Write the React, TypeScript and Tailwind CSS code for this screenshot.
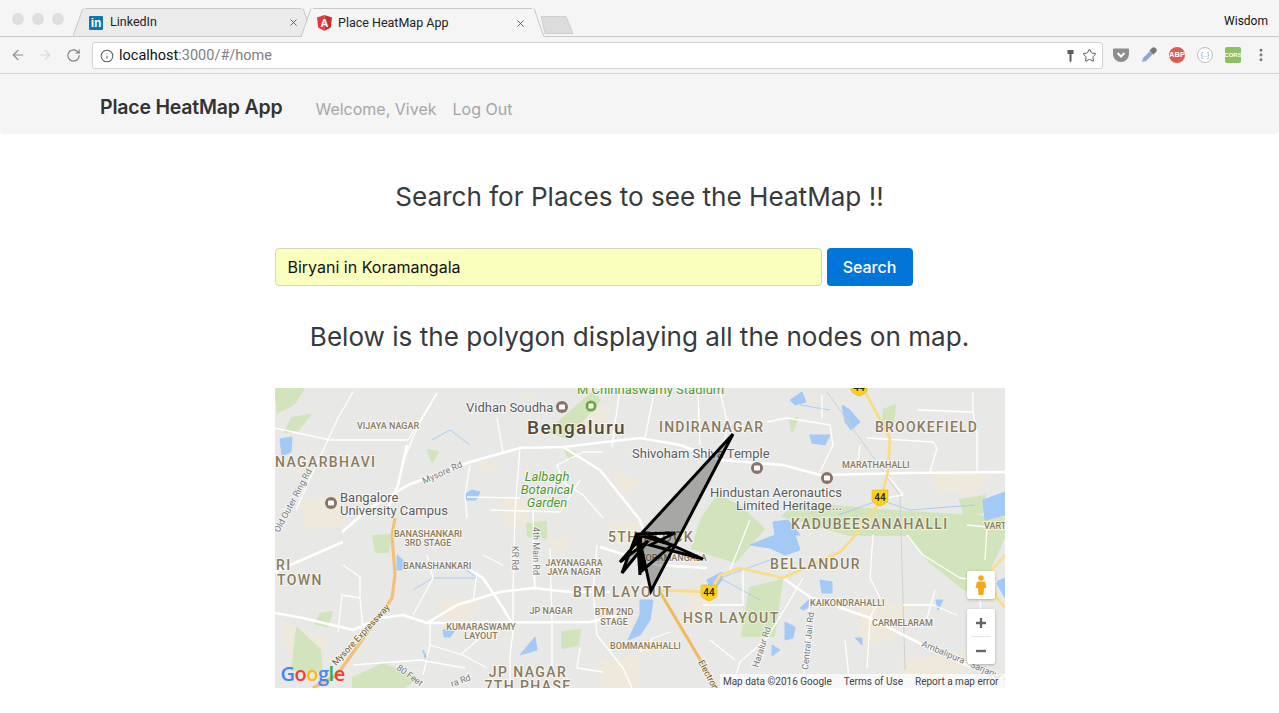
import { ArrowLeft, ArrowRight, Info, MoreVertical, RotateCw, Star, X } from 'lucide-react';

type Label = {
  text: string;
  x: number;
  y: number;
  size: number;
  color?: string;
  anchor?: 'start' | 'middle' | 'end';
  spacing?: number;
  weight?: number;
  italic?: boolean;
  rotate?: number;
};

const BROWN = '#8a7b5c';
const DARK = '#5c5c5c';
const ROAD = '#777777';
const GREEN = '#4e9a2c';

const labels: Label[] = [
  { text: 'M Chinnaswamy Stadium', x: 577, y: 394, size: 13, color: GREEN },
  { text: 'Vidhan Soudha', x: 466, y: 412, size: 13, color: DARK },
  { text: 'Bengaluru', x: 527, y: 434, size: 19, color: '#574a36', weight: 500, spacing: 1.4 },
  { text: 'VIJAYA NAGAR', x: 357, y: 429, size: 9, color: BROWN, weight: 500 },
  { text: 'NAGARBHAVI', x: 275, y: 467, size: 14, color: BROWN, weight: 500, spacing: 1.4 },
  { text: 'Mysore Rd', x: 424, y: 484, size: 9, color: ROAD, rotate: -24 },
  { text: 'Old Outer Ring Rd', x: 279, y: 533, size: 9, color: ROAD, rotate: -62 },
  { text: 'Bangalore', x: 340, y: 502, size: 13, color: DARK },
  { text: 'University Campus', x: 340, y: 515, size: 13, color: DARK },
  { text: 'Lalbagh', x: 547, y: 481, size: 13, color: GREEN, anchor: 'middle', italic: true },
  { text: 'Botanical', x: 547, y: 494, size: 13, color: GREEN, anchor: 'middle', italic: true },
  { text: 'Garden', x: 547, y: 507, size: 13, color: GREEN, anchor: 'middle', italic: true },
  { text: 'BANASHANKARI', x: 428, y: 537, size: 9, color: BROWN, anchor: 'middle', weight: 500 },
  { text: '3RD STAGE', x: 428, y: 546, size: 9, color: BROWN, anchor: 'middle', weight: 500 },
  { text: 'BANASHANKARI', x: 403, y: 569, size: 9, color: BROWN, weight: 500 },
  { text: 'RI', x: 276, y: 570, size: 14, color: BROWN, weight: 500, spacing: 1.4 },
  { text: 'TOWN', x: 277, y: 585, size: 14, color: BROWN, weight: 500, spacing: 1.4 },
  { text: 'KR Rd', x: 512, y: 546, size: 9, color: ROAD, rotate: 90 },
  { text: '4th Main Rd', x: 533, y: 527, size: 9, color: ROAD, rotate: 90 },
  { text: 'JAYANAGARA', x: 574, y: 566, size: 9, color: BROWN, anchor: 'middle', weight: 500 },
  { text: 'JAYA NAGAR', x: 574, y: 575, size: 9, color: BROWN, anchor: 'middle', weight: 500 },
  { text: 'BTM LAYOUT', x: 573, y: 597, size: 14, color: BROWN, weight: 500, spacing: 1.5 },
  { text: 'JP NAGAR', x: 551, y: 614, size: 9, color: BROWN, anchor: 'middle', weight: 500 },
  { text: 'BTM 2ND', x: 614, y: 615, size: 9, color: BROWN, anchor: 'middle', weight: 500 },
  { text: 'STAGE', x: 614, y: 625, size: 9, color: BROWN, anchor: 'middle', weight: 500 },
  { text: 'KUMARASWAMY', x: 481, y: 630, size: 9, color: BROWN, anchor: 'middle', weight: 500 },
  { text: 'LAYOUT', x: 481, y: 639, size: 9, color: BROWN, anchor: 'middle', weight: 500 },
  { text: 'BOMMANAHALLI', x: 610, y: 649, size: 9, color: BROWN, weight: 500 },
  { text: 'JP NAGAR', x: 528, y: 677, size: 14, color: BROWN, anchor: 'middle', weight: 500, spacing: 1.4 },
  { text: '7TH PHASE', x: 528, y: 691, size: 14, color: BROWN, anchor: 'middle', weight: 500, spacing: 1.4 },
  { text: 'Mysore Expressway', x: 336, y: 666, size: 9, color: '#6e5a2c', rotate: -47 },
  { text: '80 Feet', x: 396, y: 669, size: 9, color: ROAD, rotate: 36 },
  { text: 'ra Rd', x: 452, y: 687, size: 9, color: ROAD, rotate: -20 },
  { text: 'INDIRANAGAR', x: 659, y: 432, size: 14, color: BROWN, weight: 500, spacing: 1.2 },
  { text: 'Shivoham Shiva Temple', x: 632, y: 458, size: 13, color: DARK },
  { text: 'BROOKEFIELD', x: 875, y: 432, size: 14, color: BROWN, weight: 500, spacing: 1.2 },
  { text: 'MARATHAHALLI', x: 842, y: 468, size: 9, color: BROWN, weight: 500 },
  { text: 'Hindustan Aeronautics', x: 842, y: 497, size: 13, color: DARK, anchor: 'end' },
  { text: 'Limited Heritage...', x: 842, y: 510, size: 13, color: DARK, anchor: 'end' },
  { text: 'KADUBEESANAHALLI', x: 791, y: 529, size: 14, color: BROWN, weight: 500, spacing: 1.3 },
  { text: 'VART', x: 984, y: 529, size: 9, color: BROWN, weight: 500 },
  { text: '5TH BLOCK', x: 608, y: 542, size: 14, color: BROWN, weight: 500, spacing: 1.4 },
  { text: 'KORAMANGALA', x: 640, y: 561, size: 9, color: BROWN, weight: 500 },
  { text: 'BELLANDUR', x: 770, y: 569, size: 14, color: BROWN, weight: 500, spacing: 1.4 },
  { text: 'HSR LAYOUT', x: 683, y: 623, size: 14, color: BROWN, weight: 500, spacing: 1.4 },
  { text: 'KAIKONDRAHALLI', x: 810, y: 606, size: 9, color: BROWN, weight: 500 },
  { text: 'CARMELARAM', x: 872, y: 626, size: 9, color: BROWN, weight: 500 },
  { text: 'Ambalipura - Sarjapur Rd', x: 921, y: 646, size: 9, color: ROAD, rotate: 23 },
  { text: 'Electronic', x: 698, y: 662, size: 9, color: '#6e5a2c', rotate: 62 },
  { text: 'Haralur Rd', x: 758, y: 668, size: 9, color: ROAD, rotate: -72 },
  { text: 'Central Jail Rd', x: 808, y: 670, size: 9, color: ROAD, rotate: -84 },
];

const tans = [
  '480,462 500,460 498,470 482,472',
  '500,500 528,500 526,528 505,525',
  '590,410 612,405 606,420 590,422',
  '520,395 532,392 530,402',
  '610,470 640,480 625,495',
  '550,540 570,538 565,552 552,552',
  '300,500 340,495 345,525 305,530',
  '280,620 330,640 320,660 285,650',
  '610,525 640,520 640,545 615,545',
  '690,590 712,598 700,620 690,615',
  '860,600 910,605 895,640 860,645',
  '900,660 970,650 960,680 905,680',
  '930,470 990,475 975,495 935,490',
  '440,600 480,600 470,620 440,620',
  '600,660 640,655 640,688 600,688',
];

const greens = [
  '275,388 304,388 294,404 278,412',
  '292,418 310,415 298,430 285,432',
  '592,393 600,400 567,438 548,432 570,412',
  '718,495 742,508 764,529 735,562 692,548 702,518',
  '800,503 880,510 1005,518 1005,535 985,580 965,590 930,562 907,535 850,535 782,516',
  '750,588 782,580 774,636 742,636',
  '297,628 320,650 322,672 292,670',
  '353,678 383,664 417,678 403,688 353,688',
  '373,536 390,535 388,552 376,552',
  '320,614 332,612 328,626 316,624',
  '527,524 546,522 546,538 528,536',
  '884,410 895,405 893,424 882,428',
  '960,500 985,496 985,512 965,516',
  '565,450 575,452 570,460',
  '562,632 580,630 578,645 562,648',
  '428,450 438,452 432,462',
  '790,420 798,418 792,432',
];

const waters = [
  '280,439 292,437 291,452 282,456',
  '842,405 850,410 860,422 851,430 845,422',
  '810,435 830,435 825,445 812,443',
  '790,400 802,392 806,402 795,405',
  '773,522 788,520 800,535 775,535',
  '750,545 775,535 795,535 800,550 785,555 770,548',
  '983,500 1005,492 1005,515 985,520',
  '707,580 722,572 722,580 712,592',
  '820,580 832,582 832,593 822,593',
  '800,608 812,597 812,606 803,610',
  '785,622 795,627 793,638 785,640',
  '772,645 780,650 772,656',
  '936,600 943,600 938,610',
  '855,638 862,638 862,645',
  '628,640 640,615 640,635',
  '640,600 653,600 650,620 640,635',
  '520,655 535,637 537,650',
  '443,630 455,630 450,637 444,637',
  '423,650 428,660 425,658',
  '397,555 403,560 402,570 397,570',
  '465,494 472,490 480,492 476,500 466,500',
  '996,582 1005,578 1005,598',
];

const canals = [
  'M413,590 L433,578 L477,578 L460,565',
  'M838,515 L880,500 L910,510 L975,505',
  'M770,560 L720,578 L760,600',
  'M432,440 L450,430 L470,445',
  'M800,405 L830,410',
];

const mainRoads = [
  'M342,532 L370,508 L408,485 L470,462 L520,448 L563,447 L640,438',
  'M275,613 L303,618 L353,630 L380,618 L403,615 L427,623 L457,605 L500,592 L533,588 L570,592 L610,592',
  'M275,572 L297,562 L343,542',
  'M467,568 L483,578 L503,608 L513,625',
  'M427,623 L590,622 L630,612',
  'M640,438 L680,445 L720,460 L783,465 L820,475 L907,473 L1005,472',
  'M600,547 L657,565 L707,568',
  'M783,578 L810,597 L870,618 L923,645 L973,668',
  'M407,445 L398,485 L385,515',
  'M563,447 L600,470 L640,520 L645,535',
];

const minorRoads = [
  'M353,392 L338,418 L313,472 L296,510',
  'M275,428 L330,440 L408,440 L437,393',
  'M403,462 L417,428 L437,393',
  'M497,418 L503,452',
  'M465,495 L467,518 M467,497 L520,498',
  'M470,465 L465,495',
  'M563,482 L583,495 L603,518',
  'M603,452 L583,452 L557,465 L563,482',
  'M620,388 L612,447',
  'M655,388 L645,438',
  'M698,395 L700,445',
  'M720,392 L728,425 L720,460',
  'M767,422 L787,418 L830,425 L833,445 L820,472',
  'M822,395 L822,418',
  'M867,438 L933,442 L937,448 L930,472',
  'M860,445 L857,468',
  'M917,410 L973,412 L977,432 L977,472',
  'M973,392 L973,412',
  'M887,475 L903,495 L887,498',
  'M967,525 L987,527 L985,560',
  'M520,448 L515,510 L513,592',
  'M533,510 L535,588',
  'M490,510 L560,512 L580,480',
  'M343,565 L360,577 L360,598 L342,595 L338,632',
  'M360,598 L363,628',
  'M430,622 L430,645 L423,675',
  'M430,645 L463,655 L487,668',
  'M460,655 L487,632 L487,620',
  'M477,572 L473,602',
  'M483,555 L503,565',
  'M427,555 L433,578 L413,615',
  'M513,592 L513,632 L510,655 L510,688',
  'M533,568 L535,588',
  'M550,548 L552,625 L552,668',
  'M597,545 L593,592 L597,635 L623,668 L632,688',
  'M580,648 L577,668 L603,672',
  'M873,535 L870,578 L880,598 L870,618 L867,668',
  'M903,605 L933,605 L957,615',
  'M907,535 L923,555 L960,578 L997,582',
  'M743,568 L743,605 L703,605',
  'M767,638 L740,662 L733,685',
  'M803,578 L787,605 L767,638',
  'M810,598 L803,688',
  'M670,632 L653,638 L640,652',
  'M710,640 L735,660',
  'M750,520 L730,570',
  'M935,590 L925,625',
  'M980,600 L985,660',
  'M845,640 L850,688',
  'M353,665 L420,660 L465,668',
];

function LinkedInIcon() {
  return (
    <span className="mr-[7px] flex h-[14px] w-[14px] items-end justify-center rounded-[1px] bg-[#0b78b4] font-['Liberation_Sans',sans-serif] text-[12px] leading-[13px] font-bold text-white">
      in
    </span>
  );
}

function AngularIcon() {
  return (
    <svg className="mr-[6px]" width="15" height="16" viewBox="0 0 15 16">
      <polygon points="7.5,0 15,2.6 13.8,12.5 7.5,16" fill="#c82e31" />
      <polygon points="7.5,0 0,2.6 1.2,12.5 7.5,16" fill="#e3393c" />
      <text x="7.5" y="12" textAnchor="middle" fontSize="11" fontWeight="700" fill="#fff" fontFamily="Liberation Sans, sans-serif">
        A
      </text>
    </svg>
  );
}

function Slant({ side, fill }: { side: 'left' | 'right'; fill: string }) {
  const left = side === 'left';
  return (
    <svg width="12" height="28" viewBox="0 0 12 28" className="shrink-0">
      <polygon points={left ? '0,28 10,0.5 12,0.5 12,28' : '12,28 2,0.5 0,0.5 0,28'} fill={fill} />
      <line x1={left ? 0 : 12} y1="28" x2={left ? 10 : 2} y2="0.5" stroke="#c6c6c6" />
    </svg>
  );
}

function BrowserChrome() {
  return (
    <div className="bg-[#f5f5f5] font-['Roboto',sans-serif] text-[12.5px] text-[#222]">
      {/* tab strip */}
      <div className="flex h-[37px] items-end border-b border-[#c9c9c9] pl-[12px]">
        <div className="mb-[11px] flex gap-[8px] self-end">
          <span className="h-[12px] w-[12px] rounded-full bg-[#dedede]" />
          <span className="h-[12px] w-[12px] rounded-full bg-[#dedede]" />
          <span className="h-[12px] w-[12px] rounded-full bg-[#dedede]" />
        </div>
        <div className="ml-[9px] flex h-[28px] w-[240px] shrink-0">
          <Slant side="left" fill="#ebebeb" />
          <div className="flex flex-1 items-center border-t border-[#c9c9c9] bg-[#ebebeb] pr-[2px] pl-[4px]">
            <LinkedInIcon />
            <span className="flex-1">LinkedIn</span>
            <X size={11} strokeWidth={2} className="text-[#555]" />
          </div>
          <Slant side="right" fill="#ebebeb" />
        </div>
        <div className="z-10 -mb-px -ml-[12px] flex h-[29px] w-[243px] shrink-0">
          <svg width="12" height="29" viewBox="0 0 12 29" className="shrink-0">
            <polygon points="0,29 10,0.5 12,0.5 12,29" fill="#f5f5f5" />
            <line x1="0" y1="29" x2="10" y2="0.5" stroke="#c6c6c6" />
          </svg>
          <div className="flex flex-1 items-center border-t border-[#c9c9c9] bg-[#f5f5f5] pr-[6px] pl-[4px]">
            <AngularIcon />
            <span className="flex-1">Place HeatMap App</span>
            <X size={11} strokeWidth={2} className="text-[#555]" />
          </div>
          <svg width="12" height="29" viewBox="0 0 12 29" className="shrink-0">
            <polygon points="12,29 2,0.5 0,0.5 0,29" fill="#f5f5f5" />
            <line x1="12" y1="29" x2="2" y2="0.5" stroke="#c6c6c6" />
          </svg>
        </div>
        <svg width="34" height="18" viewBox="0 0 34 18" className="mb-[2px] -ml-[4px] shrink-0">
          <polygon points="1,0.5 26,0.5 33,17.5 5,17.5" fill="#dcdcdc" stroke="#cfcfcf" />
        </svg>
        <span className="mb-[6px] ml-auto pr-[11px] text-[12px] text-[#111]">Wisdom</span>
      </div>

      {/* toolbar */}
      <div className="flex h-[37px] items-center border-b border-[#d0d0d0] pr-[9px] pl-[10px]">
        <ArrowLeft size={16} strokeWidth={1.8} className="text-[#8a8a8a]" />
        <ArrowRight size={16} strokeWidth={1.8} className="ml-[11px] text-[#d8d8d8]" />
        <RotateCw size={15} strokeWidth={1.8} className="ml-[13px] text-[#7f7f7f]" />
        <div className="mt-px ml-[11px] flex h-[27px] w-[1011px] items-center rounded-[3px] border border-[#d3d3d3] bg-white pr-[5px] pl-[7px]">
          <Info size={14} strokeWidth={1.8} className="text-[#5f5f5f]" />
          <span className="ml-[5px] flex-1 text-[14.5px] text-[#111]">
            localhost<span className="text-[#808080]">:3000/#/home</span>
          </span>
          <svg width="9" height="14" viewBox="0 0 9 14" className="mr-[7px]">
            <path d="M1.5 1 h6 v4 h-2 v7 l-1 1.5 l-1 -1.5 v-7 h-2 z" fill="#5c5c5c" />
          </svg>
          <Star size={15} strokeWidth={1.6} className="text-[#5a5a5a]" />
        </div>
        <svg width="16" height="14" viewBox="0 0 16 14" className="ml-[10px]">
          <path d="M1 0.5 h14 a1 1 0 0 1 1 1 v4.5 a8 8 0 0 1 -16 0 v-4.5 a1 1 0 0 1 1 -1 z" fill="#8e8e8e" />
          <path d="M4.5 5 L8 8.5 L11.5 5" fill="none" stroke="#fff" strokeWidth="2" />
        </svg>
        <svg width="16" height="16" viewBox="0 0 16 16" className="ml-[12px]">
          <path d="M1 15 L2 11 L9 4 L12 7 L5 14 Z" fill="#8fa9d6" />
          <path d="M8.5 3.5 L11 1 Q13 -0.5 15 1.5 Q16.5 3 15 5 L12.5 7.5 Z" fill="#777" />
        </svg>
        <div className="ml-[12px] flex h-[16px] w-[16px] items-center justify-center rounded-full bg-[#dc5b52] font-['Liberation_Sans',sans-serif] text-[7.5px] font-bold text-white">
          ABP
        </div>
        <div className="ml-[12px] flex h-[16px] w-[16px] items-center justify-center rounded-full border border-[#bdbdbd] bg-white font-['Liberation_Sans',sans-serif] text-[7px] text-[#999]">
          {'{..}'}
        </div>
        <div className="ml-[12px] flex h-[16px] w-[16px] items-center justify-center rounded-[2px] bg-[#8cc063] font-['Liberation_Sans',sans-serif] text-[6px] font-bold text-white">
          CORS
        </div>
        <MoreVertical size={16} strokeWidth={2.4} className="ml-[12px] text-[#777]" />
      </div>
    </div>
  );
}

function MapLabel({ label }: { label: Label }) {
  const { text, x, y, size, color, anchor, spacing, weight, italic, rotate } = label;
  return (
    <text
      x={x}
      y={y}
      fontSize={size}
      fill={color}
      textAnchor={anchor ?? 'start'}
      letterSpacing={spacing}
      fontWeight={weight ?? 400}
      fontStyle={italic ? 'italic' : 'normal'}
      transform={rotate ? `rotate(${rotate} ${x} ${y})` : undefined}
      stroke="#ffffff"
      strokeOpacity={0.65}
      strokeWidth={2}
      className="[paint-order:stroke]"
    >
      {text}
    </text>
  );
}

function Shield({ x, y }: { x: number; y: number }) {
  return (
    <g>
      <path
        d={`M${x - 7} ${y - 7} h14 a1 1 0 0 1 1 1 v9 q0 3 -8 6 q-8 -3 -8 -6 v-9 a1 1 0 0 1 1 -1 z`}
        fill="#fcd116"
        stroke="#d8b240"
        strokeWidth="0.6"
      />
      <text x={x} y={y + 4} fontSize="10" fontWeight="500" textAnchor="middle" fill="#222">
        44
      </text>
    </g>
  );
}

function Poi({ x, y }: { x: number; y: number }) {
  return (
    <g>
      <circle cx={x} cy={y} r="6" fill="#8a7168" />
      <rect x={x - 3} y={y - 2.5} width="6" height="5" rx="1" fill="#fff" />
    </g>
  );
}

function MapCanvas() {
  return (
    <svg
      viewBox="275 388 730 300"
      width="730"
      height="300"
      className="block font-['Roboto',sans-serif]"
    >
      <rect x="275" y="388" width="730" height="300" fill="#e8e8e6" />
      {tans.map((points) => (
        <polygon key={points} points={points} fill="#eee9da" />
      ))}
      {greens.map((points) => (
        <polygon key={points} points={points} fill="#d2e4bb" stroke="#d2e4bb" strokeWidth="2" strokeLinejoin="round" />
      ))}
      {waters.map((points) => (
        <polygon key={points} points={points} fill="#a3c9f6" stroke="#a3c9f6" strokeLinejoin="round" />
      ))}
      {canals.map((d) => (
        <path key={d} d={d} fill="none" stroke="#a3c9f6" strokeWidth="0.9" />
      ))}
      <path d="M827,392 L900,495 L905,670" fill="none" stroke="#cfcfcf" strokeWidth="1" />
      {minorRoads.map((d) => (
        <path key={d} d={d} fill="none" stroke="#ffffff" strokeWidth="1.3" strokeLinejoin="round" />
      ))}
      {mainRoads.map((d) => (
        <path key={d} d={d} fill="none" stroke="#ffffff" strokeWidth="2.6" strokeLinejoin="round" />
      ))}
      {/* highways */}
      <path
        d="M863,388 L890,438 L888,472 L880,502 L853,538 L840,552 L783,578 L740,568 L720,575 L710,592 L660,590"
        fill="none"
        stroke="#f9dc85"
        strokeWidth="2.8"
        strokeLinejoin="round"
      />
      <path d="M1005,555 L990,572 L997,598 L1005,608" fill="none" stroke="#f9dc85" strokeWidth="2.4" />
      <path d="M660,592 L717,688" fill="none" stroke="#f0b95c" strokeWidth="3" />
      <path d="M395,518 L392,535 L395,575 L392,598 L337,675 L313,688" fill="none" stroke="#f3c076" strokeWidth="3.2" strokeLinejoin="round" />

      {labels.map((label) => (
        <MapLabel key={`${label.text}-${label.x}`} label={label} />
      ))}

      <Poi x={562} y={407} />
      <circle cx={591} cy={406} r="5.5" fill="#6aa83f" />
      <rect x={588.5} y={403.5} width="5" height="5" rx="1" fill="#fff" />
      <Poi x={331} y={503} />
      <Poi x={757} y={468} />
      <Poi x={827} y={478} />
      <Shield x={709} y={592} />
      <Shield x={880} y={497} />
      <Shield x={859} y={387} />

      {/* polygon overlay */}
      <polygon
        points="733,434 651,591 641,546 640,575 637,533 622,573 648,541 620,562 645,533 703,559 650,545 675,533 636,534 672,545 643,570 640,535"
        fill="#000000"
        fillOpacity="0.28"
        stroke="#000000"
        strokeWidth="3"
      />
    </svg>
  );
}

function GoogleMap() {
  return (
    <div className="relative h-[300px] w-[730px] overflow-hidden">
      <MapCanvas />
      {/* Google logo */}
      <div className="absolute bottom-[1px] left-[6px] font-['Open_Sans',sans-serif] text-[20px] leading-[26px] font-semibold tracking-[-0.5px]">
        <span className="text-[#4285f4]">G</span>
        <span className="text-[#ea4335]">o</span>
        <span className="text-[#fbbc05]">o</span>
        <span className="text-[#4285f4]">g</span>
        <span className="text-[#34a853]">l</span>
        <span className="text-[#ea4335]">e</span>
      </div>
      {/* attribution */}
      <div className="absolute right-0 bottom-0 flex h-[14px] w-[285px] items-center justify-end gap-[12px] bg-white/70 pr-[6px] font-['Roboto',sans-serif] text-[10px] text-[#444]">
        <span>Map data ©2016 Google</span>
        <span>Terms of Use</span>
        <span>Report a map error</span>
      </div>
      {/* street view + zoom */}
      <div className="absolute top-[183px] right-[10px] flex flex-col gap-[10px]">
        <div className="flex h-[28px] w-[28px] items-center justify-center rounded-[2px] bg-white shadow-[0_1px_3px_rgba(0,0,0,0.25)]">
          <svg width="12" height="20" viewBox="0 0 12 20">
            <circle cx="6" cy="3" r="2.8" fill="#f5a81c" />
            <path d="M2 6.5 h8 l1.5 6.5 h-2.5 l-0.5 7 h-5 l-0.5 -7 h-2.5 z" fill="#f5a81c" />
          </svg>
        </div>
        <div className="flex h-[55px] w-[28px] flex-col items-center rounded-[2px] bg-white shadow-[0_1px_3px_rgba(0,0,0,0.25)]">
          <div className="flex h-[27px] items-center text-[#666]">
            <svg width="12" height="12" viewBox="0 0 12 12">
              <path d="M1 6 H11 M6 1 V11" stroke="#666" strokeWidth="2.4" />
            </svg>
          </div>
          <div className="h-px w-[20px] bg-[#e6e6e6]" />
          <div className="flex h-[27px] items-center">
            <svg width="12" height="12" viewBox="0 0 12 12">
              <path d="M1 6 H11" stroke="#666" strokeWidth="2.4" />
            </svg>
          </div>
        </div>
      </div>
    </div>
  );
}

export default function App() {
  return (
    <div className="h-[713px] overflow-hidden bg-white font-['Inter',sans-serif]">
      <BrowserChrome />

      <nav className="flex h-[60px] items-center rounded-b-[4px] bg-[#f5f5f5] pt-[9px] pl-[100px]">
        <span className="-mt-[2px] text-[19.5px] font-semibold tracking-[-0.2px] text-[#333]">Place HeatMap App</span>
        <span className="ml-[33px] text-[16px] text-[#a6a6a6]">Welcome, Vivek</span>
        <span className="ml-[16px] text-[16px] text-[#a6a6a6]">Log Out</span>
      </nav>

      <main className="flex flex-col items-center">
        <h1 className="mt-[46px] text-[26.1px] leading-[34px] text-[#373a3c]">
          Search for Places to see the HeatMap !!
        </h1>
        <form className="mt-[34px] flex w-[730px] gap-[5px]">
          <input
            readOnly
            value="Biryani in Koramangala"
            className="h-[38px] w-[547px] rounded-[4px] border border-[#d4d4c0] bg-[#faffbd] px-[12px] text-[16px] text-[#111] outline-none"
          />
          <button type="button" className="h-[38px] w-[86px] rounded-[4px] bg-[#0275d8] text-[16px] font-medium text-white">
            Search
          </button>
        </form>
        <h2 className="mt-[34px] text-[26.1px] leading-[34px] text-[#373a3c]">
          Below is the polygon displaying all the nodes on map.
        </h2>
        <div className="mt-[34px]">
          <GoogleMap />
        </div>
      </main>
    </div>
  );
}
